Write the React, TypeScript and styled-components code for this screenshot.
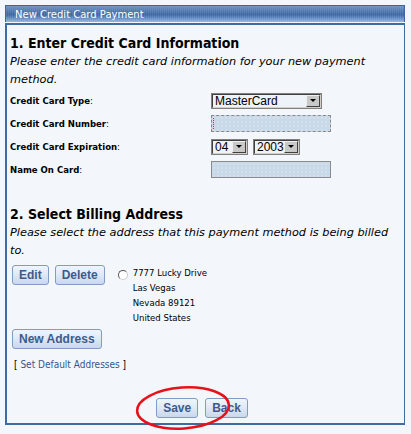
import styled, { createGlobalStyle } from 'styled-components'

const GlobalStyle = createGlobalStyle`
  html, body {
    margin: 0;
    padding: 0;
    background: #f3f6fa;
  }
  body {
    font-family: "DejaVu Sans", Verdana, sans-serif;
    color: #000;
  }
`

const Page = styled.div`
  padding: 5px 6px 8px 5px;
  width: 400px;
`

const TitleBar = styled.div`
  height: 16px;
  padding-left: 9px;
  display: flex;
  align-items: center;
  color: #fff;
  font-size: 10px;
  border: 1px solid #3b68a0;
  border-bottom: none;
  background: repeating-linear-gradient(90deg, rgba(255, 255, 255, 0.08) 0 1px, transparent 1px 2px),
    linear-gradient(#6f93c2 0%, #4d76ae 35%, #3d66a2 55%, #6f93c6 80%, #9ab4d8 100%);
`

const Panel = styled.div`
  margin-top: 1px;
  border: 2px solid #3f6aa2;
  border-width: 2px 1px 2px 2px;
  padding: 8px 4px 0 3px;
  height: 402px;
  box-sizing: border-box;
`

const Heading = styled.h2`
  margin: 0;
  font-family: "DejaVu Sans Condensed", "DejaVu Sans", sans-serif;
  font-size: 14px;
  font-weight: bold;
  line-height: 20px;
`

const Intro = styled.p`
  margin: 0;
  font-size: 11.3px;
  font-style: italic;
  line-height: 18px;
`

const FormGrid = styled.div`
  display: grid;
  grid-template-columns: 201px 1fr;
  grid-auto-rows: 23px;
  align-items: center;
  margin-bottom: 23px;
`

const Label = styled.div`
  font-family: "DejaVu Sans Condensed", "DejaVu Sans", sans-serif;
  font-size: 9.5px;
  font-weight: bold;
  span {
    font-weight: normal;
  }
`

const Field = styled.div`
  display: flex;
  gap: 5px;
  align-items: center;
`

const Select = styled.div<{ $w: number }>`
  width: ${(p) => p.$w}px;
  height: 16px;
  box-sizing: border-box;
  border: 2px solid;
  border-color: #404040 #d4d0c8 #d4d0c8 #404040;
  outline: 1px solid #808080;
  outline-offset: -1px;
  background: #eef2f9;
  display: flex;
  align-items: center;
  justify-content: space-between;
  font-family: "Liberation Sans", Arial, sans-serif;
  font-size: 12px;
  padding-left: 2px;
`

const Arrow = styled.div`
  width: 14px;
  height: 12px;
  background: #c8c8c8;
  border: 1px solid;
  border-color: #f0f0f0 #404040 #404040 #f0f0f0;
  box-sizing: border-box;
  display: flex;
  align-items: center;
  justify-content: center;
  &::after {
    content: '';
    border-left: 3px solid transparent;
    border-right: 3px solid transparent;
    border-top: 3px solid #000;
  }
`

const TextInput = styled.div<{ $focus?: boolean }>`
  width: 120px;
  height: 17px;
  box-sizing: border-box;
  border: 1px ${(p) => (p.$focus ? 'dashed' : 'solid')} #8a8a8a;
  background-color: #c9d9e8;
  background-image: radial-gradient(#dbe6f1 0.6px, transparent 0.8px);
  background-size: 4px 4px;
  position: relative;
  ${(p) =>
    p.$focus &&
    `&::before {
      content: '';
      position: absolute;
      left: 1px;
      top: 2px;
      height: 11px;
      border-left: 1px dotted #c03040;
    }`}
`

const AddressRow = styled.div`
  display: flex;
  align-items: flex-start;
  margin-top: 5px;
`

const Button = styled.button`
  height: 20px;
  padding: 0 6px;
  border: 1px solid #7f9cc4;
  border-radius: 3px;
  background: linear-gradient(#f1f5fb 0%, #dfe8f4 50%, #c9d8ea 100%);
  color: #3c5b8c;
  font-family: "Liberation Sans", Arial, sans-serif;
  font-size: 12px;
  font-weight: bold;
  cursor: pointer;
`

const ButtonPair = styled.div`
  display: flex;
  gap: 6px;
  margin-left: 2px;
`

const Radio = styled.div`
  width: 10px;
  height: 10px;
  border-radius: 50%;
  margin: 5px 5px 0 13px;
  background: #fff;
  border: 1px solid #555;
  border-right-color: #ccc;
  border-bottom-color: #ccc;
  box-sizing: border-box;
`

const Address = styled.div`
  font-family: "DejaVu Sans Condensed", "DejaVu Sans", sans-serif;
  font-size: 9.5px;
  line-height: 15px;
`

const NewAddress = styled(Button)`
  margin: 4px 0 0 2px;
`

const LinkLine = styled.div`
  font-family: "DejaVu Sans Condensed", "DejaVu Sans", sans-serif;
  font-size: 10px;
  margin: 10px 0 0 4px;
  a {
    color: #33568c;
    text-decoration: none;
  }
`

const Actions = styled.div`
  display: flex;
  justify-content: center;
  gap: 7px;
  margin-top: 28px;
  position: relative;
  padding-right: 6px;
`

const Circle = styled.svg`
  position: absolute;
  left: 124px;
  top: -14px;
  pointer-events: none;
`

export default function App() {
  return (
    <Page>
      <GlobalStyle />
      <TitleBar>New Credit Card Payment</TitleBar>
      <Panel>
        <Heading>1. Enter Credit Card Information</Heading>
        <Intro>Please enter the credit card information for your new payment method.</Intro>
        <FormGrid>
          <Label>
            Credit Card Type<span>:</span>
          </Label>
          <Field>
            <Select $w={111}>
              MasterCard
              <Arrow />
            </Select>
          </Field>
          <Label>
            Credit Card Number<span>:</span>
          </Label>
          <Field>
            <TextInput $focus />
          </Field>
          <Label>
            Credit Card Expiration<span>:</span>
          </Label>
          <Field>
            <Select $w={37}>
              04
              <Arrow />
            </Select>
            <Select $w={47}>
              2003
              <Arrow />
            </Select>
          </Field>
          <Label>
            Name On Card<span>:</span>
          </Label>
          <Field>
            <TextInput />
          </Field>
        </FormGrid>
        <Heading>2. Select Billing Address</Heading>
        <Intro>Please select the address that this payment method is being billed to.</Intro>
        <AddressRow>
          <ButtonPair>
            <Button>Edit</Button>
            <Button>Delete</Button>
          </ButtonPair>
          <Radio />
          <Address>
            7777 Lucky Drive
            <br />
            Las Vegas
            <br />
            Nevada 89121
            <br />
            United States
          </Address>
        </AddressRow>
        <NewAddress>New Address</NewAddress>
        <LinkLine>
          [ <a href="#">Set Default Addresses</a> ]
        </LinkLine>
        <Actions>
          <Button>Save</Button>
          <Button>Back</Button>
          <Circle width="98" height="48" viewBox="0 0 98 48">
            <ellipse cx="49" cy="24" rx="46" ry="20.5" fill="none" stroke="#e8101a" strokeWidth="2.5" transform="rotate(-4 49 24)" />
          </Circle>
        </Actions>
      </Panel>
    </Page>
  )
}
